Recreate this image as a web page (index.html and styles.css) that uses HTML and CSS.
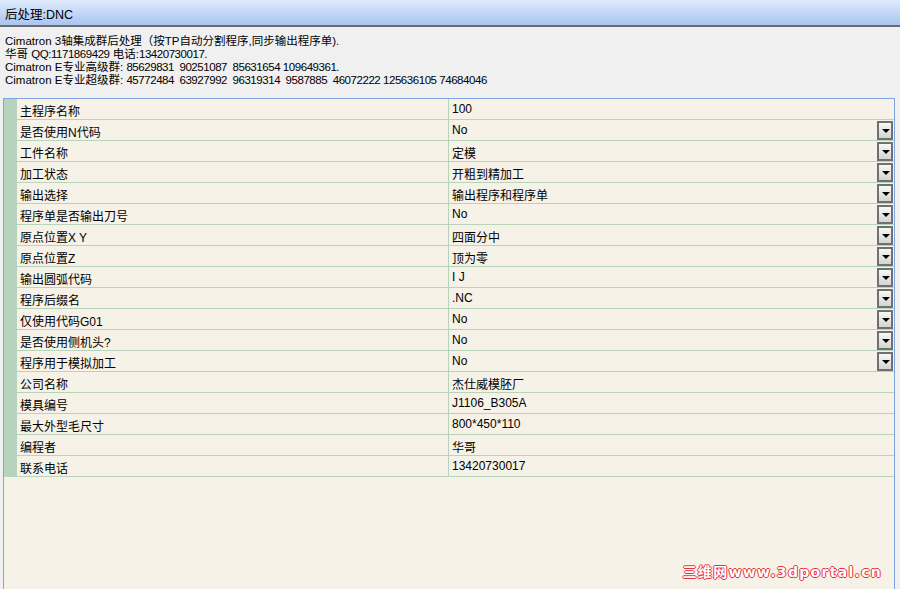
FILE: index.html
```html
<!DOCTYPE html>
<html lang="zh-CN">
<head>
  <meta charset="UTF-8" />
  <title>后处理:DNC</title>
  <link rel="stylesheet" href="styles.css">
</head>
<body>
  <div class="titlebar">后处理:DNC</div>

  <div class="info">
    <div>Cimatron 3轴集成群后处理（按TP自动分割程序,同步输出程序单).</div>
    <div>华哥 <span class="num">QQ:1171869429</span> 电话:<span class="num">13420730017.</span></div>
    <div>Cimatron E专业高级群: <span class="num">85629831&nbsp; 90251087&nbsp; 85631654 109649361.</span></div>
    <div>Cimatron E专业超级群: <span class="num">45772484&nbsp; 63927992&nbsp; 96319314&nbsp; 9587885&nbsp; 46072222 125636105 74684046</span></div>
  </div>

  <div class="grid">
    <div class="rows">
      <div class="row"><div class="name">主程序名称</div><div class="value">100</div></div>
      <div class="row"><div class="name">是否使用N代码</div><div class="value">No<span class="drop"></span></div></div>
      <div class="row"><div class="name">工件名称</div><div class="value">定模<span class="drop"></span></div></div>
      <div class="row"><div class="name">加工状态</div><div class="value">开粗到精加工<span class="drop"></span></div></div>
      <div class="row"><div class="name">输出选择</div><div class="value">输出程序和程序单<span class="drop"></span></div></div>
      <div class="row"><div class="name">程序单是否输出刀号</div><div class="value">No<span class="drop"></span></div></div>
      <div class="row"><div class="name">原点位置X Y</div><div class="value">四面分中<span class="drop"></span></div></div>
      <div class="row"><div class="name">原点位置Z</div><div class="value">顶为零<span class="drop"></span></div></div>
      <div class="row"><div class="name">输出圆弧代码</div><div class="value">I J<span class="drop"></span></div></div>
      <div class="row"><div class="name">程序后缀名</div><div class="value">.NC<span class="drop"></span></div></div>
      <div class="row"><div class="name">仅使用代码G01</div><div class="value">No<span class="drop"></span></div></div>
      <div class="row"><div class="name">是否使用侧机头?</div><div class="value">No<span class="drop"></span></div></div>
      <div class="row"><div class="name">程序用于模拟加工</div><div class="value">No<span class="drop"></span></div></div>
      <div class="row"><div class="name">公司名称</div><div class="value">杰仕威模胚厂</div></div>
      <div class="row"><div class="name">模具编号</div><div class="value">J1106_B305A</div></div>
      <div class="row"><div class="name">最大外型毛尺寸</div><div class="value">800*450*110</div></div>
      <div class="row"><div class="name">编程者</div><div class="value">华哥</div></div>
      <div class="row"><div class="name">联系电话</div><div class="value">13420730017</div></div>
    </div>
    <div class="mark">三维网www.3dportal.cn</div>
  </div>
</body>
</html>
```

FILE: styles.css
```css
* {
  box-sizing: border-box;
  margin: 0;
  padding: 0;
}

html, body {
  height: 100%;
}

body {
  background: #f0f0f0;
  font-family: "Liberation Sans", "Noto Sans CJK SC", sans-serif;
  font-size: 12px;
  color: #000;
  display: flex;
  flex-direction: column;
  overflow: hidden;
}

.titlebar {
  height: 27px;
  padding: 4px 0 0 5px;
  font-size: 12.5px;
  background: linear-gradient(#dfeafc, #a9c5f1);
  border-bottom: 2px solid #6b6b6b;
}

.info {
  padding: 8px 5px 11px 5px;
  line-height: 13px;
  font-size: 11.5px;
}

.num {
  letter-spacing: -0.45px;
}

.grid {
  flex: 1;
  position: relative;
  margin-left: 3px;
  width: 892px;
  border: 1px solid #7ea4e2;
  border-bottom: none;
  background: #f6f2e8;
}

.rows {
  border-left: 13px solid #b6d3bb;
}

.row {
  display: flex;
  height: 21px;
  border-bottom: 1px solid #b7d3b9;
}

.name {
  width: 432px;
  padding: 3px 0 0 3px;
  border-right: 1px solid #b7d3b9;
}

.value {
  flex: 1;
  position: relative;
  padding: 3px 0 0 3px;
}

.drop {
  position: absolute;
  right: 1px;
  top: 1px;
  width: 16px;
  height: 19px;
  border: 2px solid #707070;
  background: linear-gradient(#f8f8f8, #d4d4d4);
}

.drop::after {
  content: "";
  position: absolute;
  left: 3px;
  top: 6px;
  border-left: 4px solid transparent;
  border-right: 4px solid transparent;
  border-top: 4px solid #000;
}

.mark {
  position: absolute;
  right: 12px;
  bottom: 8px;
  font-family: "DejaVu Sans", "Noto Sans CJK SC", sans-serif;
  font-weight: bold;
  font-size: 14px;
  letter-spacing: 1.3px;
  color: #fff;
  text-shadow: 1px 0 #e8303a, -1px 0 #e8303a, 0 1px #e8303a, 0 -1px #e8303a;
}
```
